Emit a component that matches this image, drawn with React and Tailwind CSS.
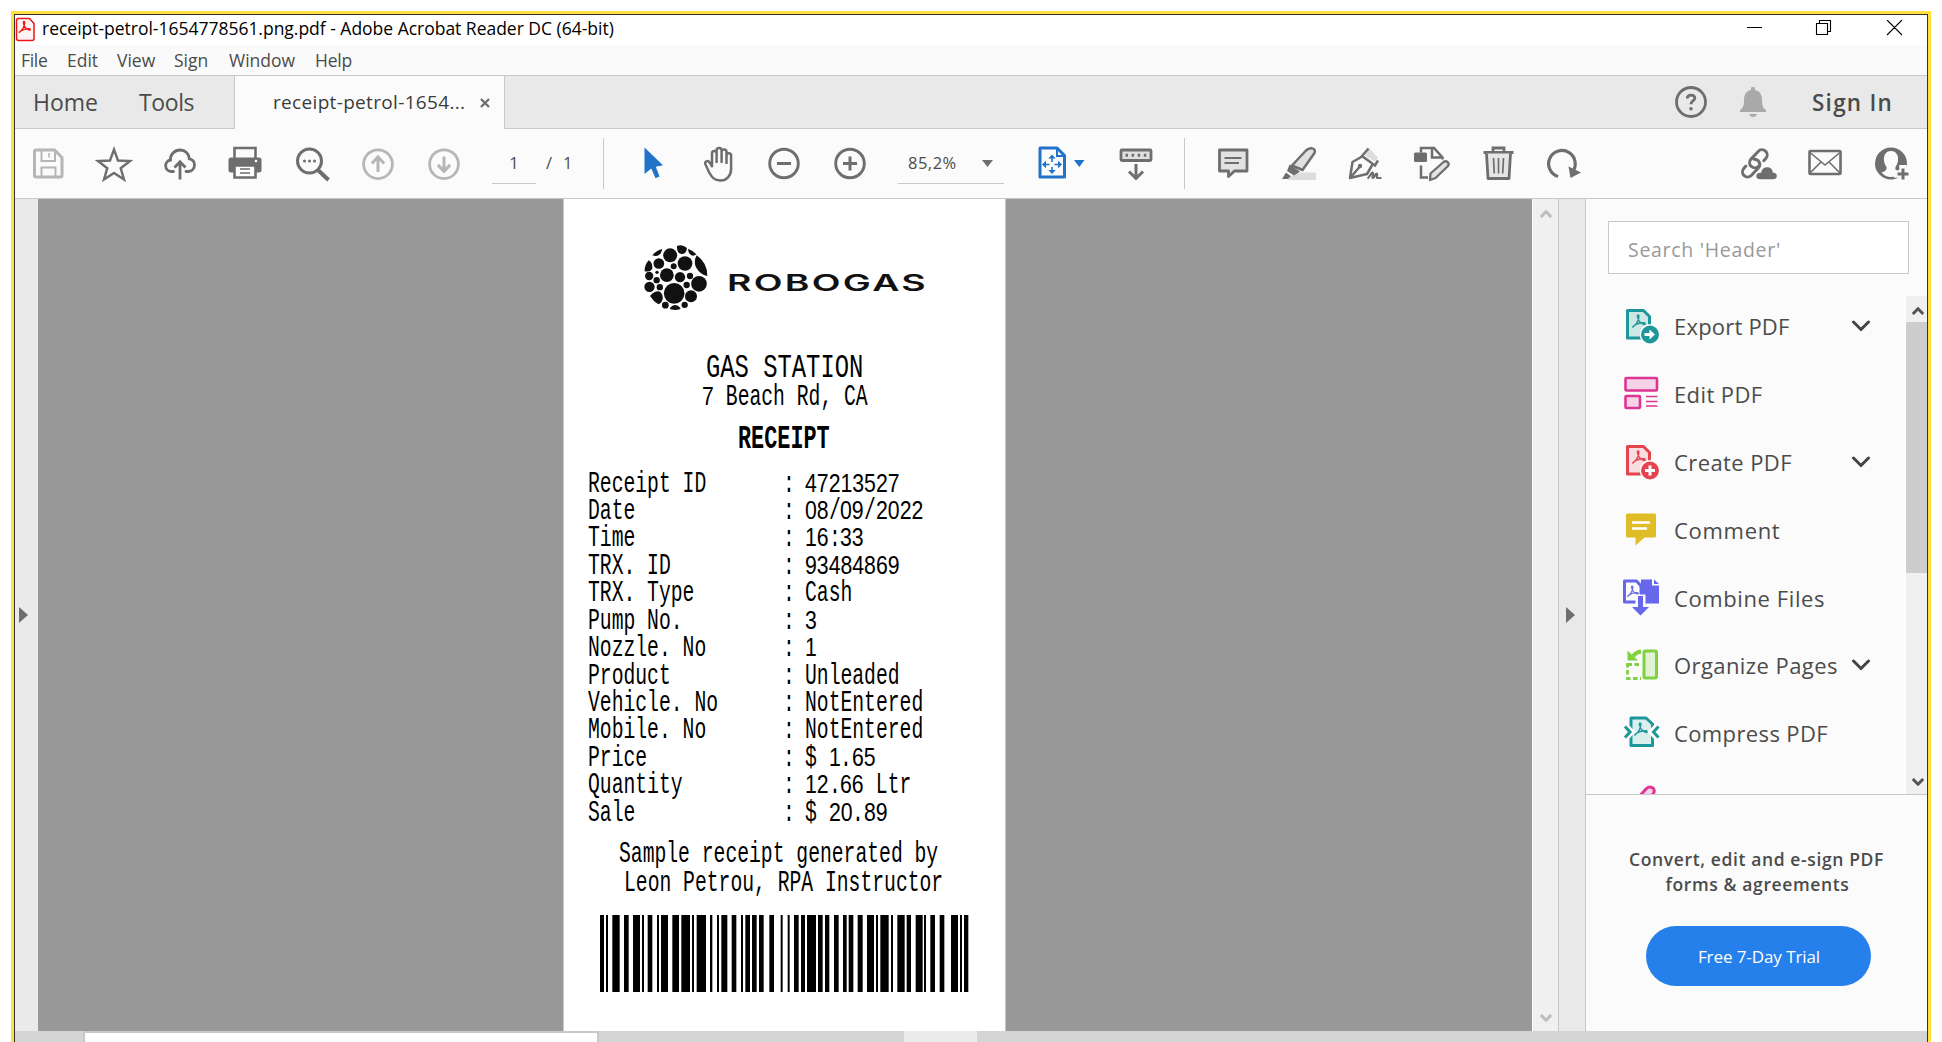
import React from "react";

const G = "#6e6e6e";
const L = "#b6b6b6";

function Ico({ box, children, c = G, className = "" }) {
  return (
    <svg width="40" height="40" viewBox={box} fill="none" stroke={c} strokeWidth="3" className={"block shrink-0 " + className}>
      {children}
    </svg>
  );
}

function Slot({ children, className = "w-[66px]" }) {
  return <div className={"flex shrink-0 justify-center " + className}>{children}</div>;
}

const Save = () => (
  <Ico box="28 143.5 40 40" c={L}>
    <path d="M36 149.5h18.500l7.500 7.500v18q0 1.500-1.500 1.500h-24.500q-1.500 0-1.500-1.500v-24q0-1.500 1.500-1.500z" />
    <path d="M41.500 149v11.500h13.500v-11.500M41.500 177v-10h14v10" strokeWidth="2" />
    <path d="M49 152.500v4.500" strokeWidth="1.600" />
  </Ico>
);
const Star = () => (
  <Ico box="94 143.500 40 40">
    <path strokeWidth="2.400" d="M114 149l4 11 12 .500-9.300 7.200 3.300 11.300-10-6.500-10 6.500 3.300-11.300-9.300-7.200 12-.5z" />
  </Ico>
);
const Cloud = () => (
  <Ico box="160 143.500 40 40">
    <path d="M173.500 171h-2.500a5.800 5.800 0 0 1-.5-11.500c-.5-5.500 4-10 9.500-10s8.800 3.600 9.300 8.800c3.400.6 5.200 3.200 5.200 6.200 0 3.700-2.700 6.500-6 6.500h-2.500" strokeWidth="2.800" strokeLinecap="round" />
    <path d="M180 179v-17M174.500 167l5.500-5.700 5.500 5.700" strokeWidth="2.800" />
  </Ico>
);
const Print = () => (
  <Ico box="224.500 143.500 40 40">
    <path d="M234 158v-10.500h21v10.500" strokeWidth="2.600" />
    <path d="M230.500 157h28q2.500 0 2.500 2.500v10.500q0 2-2.500 2h-28q-2.500 0-2.500-2v-10.500q0-2.500 2.500-2.500z" fill={G} stroke="none" />
    <path d="M234 165h21v12h-21z" fill="#fff" strokeWidth="2.600" />
    <path d="M239.500 168.500h10M239.500 172.500h10" strokeWidth="1.600" />
    <circle cx="255.500" cy="160.500" r="1.300" fill="#fff" stroke="none" />
  </Ico>
);
const Find = () => (
  <Ico box="291 143.500 40 40">
    <circle cx="309.500" cy="160.500" r="12" />
    <path d="M318 169.500l10.500 10" strokeWidth="4" />
    <g fill={G} stroke="none">
      <circle cx="304.500" cy="160.500" r="1.500" />
      <circle cx="309.500" cy="160.500" r="1.500" />
      <circle cx="314.500" cy="160.500" r="1.500" />
    </g>
  </Ico>
);
const Up = ({ down }) => (
  <Ico box="-20 -20.500 40 40" c={L}>
    <g transform={down ? "rotate(180 0 -.3)" : undefined}>
      <circle cx="0" cy="-.3" r="14.400" strokeWidth="2.800" />
      <path d="M0 7.500v-14.500M-6.200-1l6.200-6.500 6.200 6.500" />
    </g>
  </Ico>
);
const Arrow = () => (
  <Ico box="634 143.500 40 40" c="none">
    <path fill="#2173c9" d="M644.500 147l18.500 17.800-7.200 1.400 3.700 9.700-4 1.900-4.200-9.800-6.800 5.500z" />
  </Ico>
);
const Hand = () => (
  <Ico box="698 143.500 40 40">
    <path strokeWidth="2.500" strokeLinecap="round" strokeLinejoin="round" d="M709.500 163.500v-10.500c0-3.200 4.600-3.200 4.600 0v8.500v-11.500c0-3.300 5-3.300 5 0v11.500v-10c0-3.200 4.900-3.200 4.900 0v11v-7.500c0-3 4.600-3 4.600 0v13.500c0 7-4.600 11.500-10.600 11.500-6.500 0-9-3.500-11.500-8.500l-3.500-7.500c-1.300-3 2.400-4.600 4-2.200l2.500 4z" transform="translate(2.500 0)" />
  </Ico>
);
const Zoom = ({ plus }) => (
  <Ico box="-20 -20.500 40 40">
    <circle cx="0" cy="-1" r="14.300" strokeWidth="2.900" />
    <path d={plus ? "M-7-1h14M0-8v14" : "M-7-1h14"} />
  </Ico>
);
const Fit = () => (
  <Ico box="1032 143.500 40 40" c="#2173c9" className="ml-[28px]">
    <path d="M1040 147.500h17l7.500 7.500v21.500h-24.500z" strokeLinejoin="round" />
    <path d="M1057 148v7.500h7.500" strokeWidth="2" />
    <path d="M1052 157v4.500M1052 166.500v4.500M1045 164h4.500M1054.500 164h4.500" strokeWidth="1.600" />
    <path fill="#2173c9" stroke="none" d="M1052 154l3.700 4h-7.400zM1052 173.500l3.700-4h-7.400zM1042 164l4-3.800v7.600zM1062 164l-4-3.800v7.600z" />
  </Ico>
);
const Keys = () => (
  <Ico box="1116 143.500 40 40" className="ml-[31px]">
    <rect x="1121" y="149.500" width="30" height="10.500" rx="1" fill="#e0e0e0" strokeWidth="2.800" />
    <path d="M1125.500 154.800h22" strokeWidth="3" strokeDasharray="2.500 3.600" />
    <path d="M1136 163.500v14M1129 171l7 7 7-7" />
  </Ico>
);
const Note = () => (
  <Ico box="1214 143.500 40 40">
    <path d="M1220.500 149.500h27.500v21h-12.500l-6 5.500v-5.500h-9z" fill="#e2e2e2" strokeWidth="2.800" strokeLinejoin="round" />
    <path d="M1225.500 157.500h17M1225.500 162.500h14.500" strokeWidth="1.800" />
  </Ico>
);
const Marker = () => (
  <Ico box="1281 143.500 40 40">
    <path d="M1290 179l8-7h20v7.500h-28z" fill="#dcdcdc" stroke="none" />
    <path d="M1294 165l14-15c3.500-3.500 10.500-3 8.500 2.500l-12 17z" fill="#e0e0e0" strokeWidth="2.500" strokeLinejoin="round" />
    <path d="M1291.500 164l10.500 7-6 4-7-4.500zM1288 172l5 3.700-3 2.800h-6z" fill={G} stroke="none" />
  </Ico>
);
const Pen = () => (
  <Ico box="1348 143.500 40 40">
    <path d="M1368 155l4-7.500 9 9.500-3 4z" fill="#dcdcdc" stroke="none" />
    <path d="M1366 155.500l-10.500 6-2.500 16 17-4 5.500-9.500" strokeWidth="2.500" strokeLinejoin="round" />
    <path d="M1353.500 177l9-10.500M1371.500 148l-6.500 7.500 13 9.500 3-5" strokeWidth="2.500" />
    <circle cx="1363" cy="165.500" r="2.200" fill={G} stroke="none" />
    <path d="M1370.500 178c2-1 3.500-6 5-6s-1 5.500.5 5.500 2-4.500 3.500-4.500-.5 4.500 1 4.500h4" strokeWidth="2.200" />
  </Ico>
);
const EditDoc = () => (
  <Ico box="1415 143.500 40 40">
    <path d="M1424 152v-4.500h13l8.500 9.500v2M1424 165v12h7M1435 147.500v9.500h10" strokeWidth="2.500" />
    <rect x="1417" y="152" width="13" height="9.500" rx="1.500" fill={G} stroke="none" />
    <path d="M1433.500 173l13-11.500c3-2 6.500 1 4.500 4l-12.500 12-5.500 2z" fill="#e4e4e4" strokeWidth="2.300" strokeLinejoin="round" />
  </Ico>
);
const Trash = () => (
  <Ico box="1482 143.500 40 40">
    <path d="M1487.500 152h30M1497 151.500v-4h11v4" strokeWidth="2.800" />
    <path d="M1490.500 153l1.500 25h21l1.500-25" fill="#e6e6e6" strokeWidth="2.800" strokeLinejoin="round" />
    <path d="M1497.500 157.500l.8 15.500M1502.500 157.500v15.500M1507.500 157.500l-.8 15.500" strokeWidth="1.700" />
  </Ico>
);
const Rotate = () => (
  <Ico box="1549 143.500 40 40">
    <path d="M1563 176a13.300 13.300 0 1 1 14-4" strokeWidth="3.200" />
    <path d="M1573.500 166l12.500 6-10.500 5.500z" fill={G} stroke="none" />
  </Ico>
);
const Link = () => (
  <Ico box="1748 143.500 40 40">
    <g transform="rotate(-47 1765 163)" strokeWidth="3" fill="none" strokeLinecap="round">
      <path d="M1765.500 167.500a5.200 5.200 0 0 1 0-10.400h10.500a5.200 5.200 0 0 1 0 10.400h-3" />
      <path d="M1767.500 158.500a5.200 5.200 0 0 1-3 9h-10.500a5.200 5.200 0 0 1 0-10.400h3" transform="translate(0 1)" />
    </g>
    <path d="M1770 179.500c-6 0-6-8 .5-8 1.500-7.500 12-7.500 13 0 5.500 0 5.500 8-.5 8z" fill={G} stroke="#fbfbfb" strokeWidth="1.500" />
  </Ico>
);
const Mail = () => (
  <Ico box="1815 143.500 40 40">
    <rect x="1819.500" y="150.500" width="31" height="23" strokeWidth="2.600" rx="1" />
    <path d="M1820 152l15 12.500 15-12.500M1820 172.500l11-11M1850 172.500l-11-11" strokeWidth="1.600" />
  </Ico>
);
const User = () => (
  <Ico box="1882 143.500 40 40">
    <circle cx="1901" cy="163" r="16" fill={G} stroke="none" />
    <path d="M1901 150.500c5.500 0 7.500 4.500 7 9.500-.3 3-1.500 5-2.500 6.500-.5 3 .5 3.500 4 5-2.500 3.500-5 5-8.500 5s-7-1.500-9.500-4.500c4-1.500 5.500-2.500 5-5.500-1-1.500-2.300-3.500-2.500-6.500-.5-5 1.500-9.500 7-9.500z" fill="#fbfbfb" stroke="none" />
    <path d="M1913 164.500v18M1904 173.500h18" strokeWidth="7.500" stroke="#fbfbfb" />
    <path d="M1913 168v11M1907.500 173.500h11" strokeWidth="3" />
  </Ico>
);

const Tref = ({ c, t }) => (
  <path transform={t} stroke={c} strokeWidth="1.400" fill="none" strokeLinejoin="round" d="M1 12c2.500-2 5.500-6.500 6-10.500 0-2-2-2-1.600 0 .6 4 3.600 7 6.600 8 1.600.4 1.700-1.600 0-1.700-4-.1-8 1.400-10 3-1.500 1-1.500 1.700-1 1.200z" />
);

const DocIcon = ({ c, f, plus }) => (
  <>
    <path d="M6.500 4.500h16l6 6v21.500h-22z" fill={f} stroke={c} strokeWidth="3" strokeLinejoin="round" />
    <Tref c={c} t="translate(11 9)" />
    <circle cx="29" cy="28.500" r="9.700" fill={c} stroke="#fbfbfb" strokeWidth="1.500" />
    {plus ? (
      <path d="M29 23.500v10M24 28.500h10" stroke="#fff" strokeWidth="3" />
    ) : (
      <path d="M23.500 27h5v-3.500l5.500 5-5.500 5v-3.500h-5z" fill="#fff" stroke="none" />
    )}
  </>
);

const tools = [
  ["Export PDF", true, "tracking-[0.2px]", <DocIcon c="#1c979a" f="#cde7e7" />],
  ["Edit PDF", false, "tracking-[0.4px]", (
    <g stroke="#dc3593" fill="#f6d3e6" strokeWidth="2.600">
      <rect x="4.500" y="4" width="31.500" height="12.500" rx="1" />
      <rect x="4.500" y="22" width="14.500" height="12" rx="1" />
      <path d="M25 22.500h11.500M25 27.500h11.500M25 32h11.500" strokeWidth="1.600" />
    </g>
  )],
  ["Create PDF", true, "tracking-[0.4px]", <DocIcon c="#e5434e" f="#f9dcde" plus />],
  ["Comment", false, "tracking-[0.7px]", (
    <g stroke="none">
      <path d="M6.500 3.500h27q1.500 0 1.500 1.500v21q0 1.500-1.500 1.500h-10l-9 8v-8h-8q-1.500 0-1.500-1.500v-21q0-1.500 1.500-1.500z" fill="#dfbd27" />
      <path d="M11 12.500h18M11 18.500h15" stroke="#fff" strokeWidth="2.400" />
    </g>
  )],
  ["Combine Files", false, "tracking-[0.6px]", (
    <g>
      <path d="M20 1.500h11v6h7v18h-18z" fill="#6767ec" stroke="none" />
      <path d="M33 1.500v4.500h5z" fill="#6767ec" stroke="none" />
      <path d="M3.500 3h12l4.500 5v16h-16.500z" fill="#fbfbfb" stroke="#6767ec" strokeWidth="3" strokeLinejoin="round" />
      <Tref c="#6767ec" t="translate(6 8) scale(.85)" />
      <path d="M14.500 28.500v-12h10v12z" fill="#fbfbfb" stroke="none" />
      <path d="M17 18h5v11h6l-8.500 8.500-8.500-8.500h6z" fill="#6767ec" stroke="none" />
    </g>
  )],
  ["Organize Pages", true, "tracking-[0.42px]", (
    <g stroke="#7fd13f" strokeWidth="3">
      <rect x="23" y="6" width="12.500" height="27" rx="1.500" fill="#e2f3d5" />
      <path d="M6.500 18v15.500h13.500M6.500 19.500h13.500" strokeDasharray="4.500 2.500" strokeWidth="2.800" fill="none" />
      <path d="M20 6.500c-4 .5-6 2-8 4.500" strokeWidth="4" fill="none" />
      <path d="M6.500 5.500v10h10.500z" fill="#7fd13f" stroke="none" />
    </g>
  )],
  ["Compress PDF", false, "tracking-[0.38px]", (
    <g stroke="#1c979a" strokeWidth="3" fill="none">
      <path d="M10 5h15l6.500 6v21.500h-21.500z" fill="#daeeee" strokeLinejoin="round" />
      <Tref c="#1c979a" t="translate(13 10)" />
      <path d="M3 11.500l7 7.500-7 7.500M38 11.500l-7 7.500 7 7.500" stroke="#fbfbfb" strokeWidth="6.500" />
      <path d="M4 13.500l5 5.500-5 5.500M37.500 13.500l-5 5.500 5 5.500" />
    </g>
  )],
  ["Redact", false, "tracking-[0.3px]", (
    <path d="M8 27l17-19c3.500-4 10.500-1 7.500 4.500l-16 19-9 3z" fill="#f6d3e6" stroke="#dc3593" strokeWidth="3" />
  )],
];

const bars = [
  [120, 132], [138, 144], [157, 179], [192, 206], [219, 240], [246, 252], [263, 277], [291, 297], [303, 324],
  [337, 357], [364, 390], [396, 402], [410, 438], [450, 457], [471, 477], [484, 502], [515, 529], [543, 549],
  [556, 570], [576, 590], [597, 611], [628, 642], [662, 668], [683, 689], [702, 716], [723, 735], [741, 768],
  [774, 788], [795, 808], [822, 836], [849, 860], [866, 880], [893, 908], [921, 942], [948, 954], [961, 986],
  [993, 999], [1012, 1034], [1040, 1053], [1067, 1088], [1092, 1098], [1111, 1125], [1139, 1153], [1173, 1194],
  [1200, 1206], [1212, 1225],
];

// Narrow receipt lettering: every run is squeezed so that each character takes one cell.
function Mono({ children, size = 29.5, cell = 11.82 }) {
  const runs = children.match(/\d+|\D+/g);
  return (
    <span className="whitespace-pre" style={{ fontSize: size }}>
      {runs.map((r, i) => {
        const digit = /\d/.test(r);
        const fs = digit ? size * 0.905 : size;
        const sx = cell / (fs * (digit ? 0.556 : 0.6));
        return (
          <span key={i} className="inline-block leading-none" style={{ width: r.length * cell }}>
            <span
              className={digit ? "inline-block origin-left leading-none font-['Liberation_Sans',sans-serif]" : "inline-block origin-left leading-none"}
              style={{ fontSize: fs, transform: `scaleX(${sx})` }}
            >
              {r}
            </span>
          </span>
        );
      })}
    </span>
  );
}

const rows = [
  ["Receipt ID", "47213527"], ["Date", "08/09/2022"], ["Time", "16:33"], ["TRX. ID", "93484869"],
  ["TRX. Type", "Cash"], ["Pump No.", "3"], ["Nozzle. No", "1"], ["Product", "Unleaded"],
  ["Vehicle. No", "NotEntered"], ["Mobile. No", "NotEntered"], ["Price", "$ 1.65"],
  ["Quantity", "12.66 Ltr"], ["Sale", "$ 20.89"],
];

function Globe() {
  const c = [[330.5, 166, 21], [375, 190.5, 22], [296.5, 190.5, 16], [341, 199, 9], [291, 217, 5], [320.5, 225.5, 20.5], [360, 231.5, 15.5], [390, 228, 9.5], [267.5, 228, 12.5], [290, 240.5, 9.5], [380, 255, 9.5], [417, 251.5, 23.5], [268.5, 260.5, 15.5], [299.5, 261.5, 9.5], [342.5, 280, 31], [393, 289, 18], [316, 315.5, 10], [374, 314.5, 9.5]];
  return (
    <svg width="66" height="67" viewBox="249 132 198 201" fill="#111" className="mt-px shrink-0">
      {c.map(([x, y, r]) => <circle key={x + "-" + y} cx={x} cy={y} r={r} />)}
      <path d="M351 138q16-6 30 6-2 18-16 18-15-2-14-24zM384 146q16 6 25 17-10 8-19 0-6-8-6-17zM277 166q10-14 30-19-2 12-10 18-8 6-20 1zM266 181q12 6 11 24-4 12-23 9-1-18 12-33zM410 166q32 22 32 62-22-4-34-26-8-18 2-36zM270 288q10-14 26-14 14 6 12 24-4 14-14 14-14-8-24-24zM329 325q16-20 33 0-2 5-16 5-15 0-17-5z" />
    </svg>
  );
}

const Chev = ({ up, c, className = "", w = 12, sw = 3 }) => (
  <svg width={w} height={(w * 2) / 3} viewBox="0 0 12 8" fill="none" stroke={c} strokeWidth={sw} className={"shrink-0 " + className}>
    <path d={up ? "M.8 7l5.200-5.200L11.200 7" : "M.8 1l5.200 5.200L11.200 1"} />
  </svg>
);

const Tri = () => (
  <svg width="9" height="16" viewBox="0 0 10 16" preserveAspectRatio="none" fill={G}><path d="M0 0l10 8-10 8z" /></svg>
);

export default function App() {
  return (
    <div className="h-[1042px] w-[1942px] overflow-hidden bg-white pl-[11px] pt-[11px] font-['Open_Sans',sans-serif] text-[#4b4b4b]">
      <div className="flex h-[1060px] w-[1920px] flex-col border-[3px] border-[#ffe23f]">
        <div className="flex grow flex-col border border-[#333]">
          <div className="flex h-[30px] shrink-0 items-center bg-white pr-[24px] text-black">
            <svg width="20" height="26" viewBox="15 15 20 26" className="shrink-0">
              <path d="M18.500 16.500h11l4.500 5v15q0 2-2 2h-13.500q-2 0-2-2v-18q0-2 2-2z" fill="#fdf3f3" stroke="#f01414" strokeWidth="1.500" />
              <Tref c="#f01414" t="translate(18.500 19.500) scale(.9)" />
            </svg>
            <span className="ml-[7px] whitespace-nowrap pb-[3px] text-[17.5px] tracking-[-0.015px]">receipt-petrol-1654778561.png.pdf - Adobe Acrobat Reader DC (64-bit)</span>
            <svg width="156" height="16" viewBox="1747 20 156 16" className="-mt-[4px] ml-auto shrink-0" fill="none" stroke="#000" strokeWidth="1.100">
              <path d="M1747 27.500h15M1816.500 23.500h11v11h-11zM1819.500 23v-2.500h11v11h-3M1887 20l15 15M1902 20l-15 15" />
            </svg>
          </div>

          <div className="flex h-[30px] shrink-0 items-center bg-[#fafafa] pl-[6px] text-[17.5px]">
            <span className="w-[46px] tracking-[-0.3px]">File</span>
            <span className="w-[50px]">Edit</span>
            <span className="w-[57px]">View</span>
            <span className="w-[55px]">Sign</span>
            <span className="w-[86px]">Window</span>
            <span className="tracking-[-0.2px]">Help</span>
          </div>

          <div className="flex h-[54px] shrink-0 border-y border-[#c8c8c8] bg-[#e9e9e9]">
            <div className="flex w-[219px] items-center pl-[18px] text-[23px]">
              <span className="w-[106px]">Home</span>
              <span className="tracking-[-0.4px]">Tools</span>
            </div>
            <div className="-mb-px flex w-[271px] items-center border-x border-[#c8c8c8] bg-[#fbfbfb] pl-[38px] text-[19px] text-[#3c3c3c]">
              <span className="whitespace-nowrap tracking-[0.33px]">receipt-petrol-1654...</span>
              <svg width="10" height="10" viewBox="0 0 10 10" className="ml-[15px]" stroke={G} strokeWidth="2.300"><path d="M1 1l8 8M9 1l-8 8" /></svg>
            </div>
            <div className="ml-auto flex items-center">
              <svg width="34" height="34" viewBox="-17 -17 34 34" fill="none" stroke={G}>
                <circle r="14.500" strokeWidth="2.800" />
                <path d="M-3.800-3.500c0-4.500 8-4.500 7.600-.2-.3 2.500-3.800 2.700-3.800 6" strokeWidth="2.800" />
                <circle cy="6.800" r="1" strokeWidth="1.600" />
              </svg>
              <svg width="26" height="30" viewBox="0 0 26 30" className="ml-[32px]" fill="#a9a9a9">
                <path d="M11 3v-2q0-1 2-1t2 1v2c5 1 7 5 7 10 0 6 1 8 4 10v2h-26v-2c3-2 4-4 4-10 0-5 2-9 7-10zM9 27h8q-1 3-4 3t-4-3z" />
              </svg>
              <span className="ml-[46px] w-[115px] whitespace-nowrap pt-px text-[22.5px] font-semibold tracking-[1.25px]">Sign In</span>
            </div>
          </div>

          <div className="flex h-[70px] shrink-0 items-center border-b border-[#c8c8c8] bg-[#fbfbfb] text-[16.5px]">
            <Slot><Save /></Slot>
            <Slot><Star /></Slot>
            <Slot><Cloud /></Slot>
            <Slot className="w-[64px]"><Print /></Slot>
            <Slot className="w-[68px]"><Find /></Slot>
            <Slot><Up /></Slot>
            <Slot><Up down /></Slot>
            <div className="ml-[15px] flex h-[41px] w-[44px] items-center justify-center border-b border-[#c8c8c8]">1</div>
            <div className="flex w-[67px] gap-[11px] pl-[10px]"><span>/</span><span>1</span></div>
            <div className="h-[51px] w-px bg-[#c8c8c8]" />
            <Slot className="ml-[17px] w-[66px]"><Arrow /></Slot>
            <Slot className="w-[62px]"><Hand /></Slot>
            <Slot className="w-[70px]"><Zoom /></Slot>
            <Slot className="w-[62px]"><Zoom plus /></Slot>
            <div className="ml-[17px] flex h-[41px] w-[106px] items-center border-b border-[#c8c8c8] pl-[10px]">
              <span className="w-[74px] tracking-[0.5px]">85,2%</span>
              <svg width="11" height="7" viewBox="0 0 11 7" fill={G}><path d="M0 0h11l-5.500 7z" /></svg>
            </div>
            <Fit />
            <svg width="11" height="7" viewBox="0 0 11 7" fill="#2173c9" className="ml-[2px]"><path d="M0 0h10.500l-5.200 7z" /></svg>
            <Keys />
            <div className="ml-[28px] h-[51px] w-px bg-[#c8c8c8]" />
            <div className="ml-[28px] flex gap-[26.2px]">
              <Note /><Marker /><Pen /><EditDoc /><Trash /><Rotate />
            </div>
            <div className="ml-auto mr-[15px] flex gap-[27px]">
              <Link /><Mail /><User />
            </div>
          </div>

          <div className="flex h-[832px] shrink-0">
            <div className="flex w-[23px] items-center bg-[#eaeaea] pl-[4px]"><Tri /></div>
            <div className="w-[1494px] bg-[#999] pl-[525px]">
              <div className="h-full w-[443px] border-x border-[#c8c8c8] bg-white text-[29.5px] text-black font-['Liberation_Mono',monospace]">
                <div className="flex h-[152px] pl-[79px] pt-[44px]">
                  <Globe />
                  <span className="ml-[18px] mt-[25px] h-[30px] origin-left scale-x-[1.67] text-[22.4px] font-semibold leading-[30px] tracking-[1.4px] text-[#111] font-['Inter',sans-serif]">ROBOGAS</span>
                </div>
                <div className="h-[30px] pl-[141.5px] leading-[30px]"><Mono size={34} cell={14.3}>GAS STATION</Mono></div>
                <div className="mt-px h-[30px] pl-[138px] leading-[30px]"><Mono>7 Beach Rd, CA</Mono></div>
                <div className="mt-[11px] h-[30px] pl-[174px] font-bold leading-[28px]"><Mono size={33.5} cell={13.1}>RECEIPT</Mono></div>
                <div className="mt-[16.5px] pl-[24px]">
                  {rows.map(([a, b]) => (
                    <div key={a} className="flex h-[27.45px] leading-[27.45px]">
                      <div className="w-[195px]"><Mono>{a}</Mono></div>
                      <div className="w-[22px]"><Mono>:</Mono></div>
                      <Mono>{b}</Mono>
                    </div>
                  ))}
                </div>
                <div className="mt-[14.3px] h-[28.3px] pl-[54.5px] leading-[28.3px]"><Mono>Sample receipt generated by</Mono></div>
                <div className="h-[28.3px] pl-[60px] leading-[28.3px]"><Mono>Leon Petrou, RPA Instructor</Mono></div>
                <svg width="369" height="77" viewBox="120 0 1107 231" preserveAspectRatio="none" className="ml-[36px] mt-[17.5px] block">
                  {bars.map(([a, b]) => <rect key={a} x={a} y="0" width={b - a} height="231" />)}
                </svg>
              </div>
            </div>
            <div className="flex w-[27px] flex-col items-center justify-between border-x border-l-white border-r-[#c8c8c8] bg-[#f0f0f0] pb-[9px] pt-[11px]">
              <Chev up c="#bdbdbd" />
              <Chev c="#bdbdbd" />
            </div>
            <div className="flex w-[27px] items-center border-r border-[#c8c8c8] bg-[#e9e9e9] pl-[7px]"><Tri /></div>
            <div className="flex w-[341px] flex-col bg-[#fbfbfb]">
              <div className="ml-[22px] mt-[22px] flex h-[53px] w-[301px] shrink-0 items-center border border-[#c8c8c8] bg-white pl-[19px] pt-[5px] text-[19.5px] tracking-[0.7px] text-[#999]">Search &#39;Header&#39;</div>
              <div className="mt-[22px] flex h-[498px] shrink-0 overflow-hidden">
                <div className="-mt-[4px] w-[319px]">
                  {tools.map(([n, more, track, ic]) => (
                    <div key={n} className="flex h-[67.9px] items-center pl-[35px] text-[22px]">
                      <svg width="40" height="40" viewBox="0 0 40 40" className="shrink-0">{ic}</svg>
                      <span className={"ml-[13px] w-[177px] whitespace-nowrap pt-px " + track}>{n}</span>
                      {more && (
                        <svg width="20" height="12" viewBox="0 0 20 12" fill="none" stroke="#444" strokeWidth="3" strokeLinecap="round"><path d="M2.500 2l7.500 7.500L17.500 2" /></svg>
                      )}
                    </div>
                  ))}
                </div>
                <div className="flex w-[22px] flex-col items-center border-l border-white bg-[#f0f0f0]">
                  <div className="flex h-[26px] shrink-0 items-center pl-[2px] pt-[3px]"><Chev up c="#555" /></div>
                  <div className="h-[251px] w-full bg-[#cdcdcd]" />
                  <Chev c="#555" className="mb-[8px] ml-[2px] mt-auto" />
                </div>
              </div>
              <div className="flex grow flex-col items-center border-t border-[#c8c8c8] pt-[52px]">
                <p className="text-center text-[17.5px] font-semibold leading-[25px] tracking-[0.62px]">
                  Convert, edit and e-sign PDF<br /><span className="pl-[2px]">forms &amp; agreements</span>
                </p>
                <button className="ml-[3px] mt-[29px] h-[60px] w-[225px] rounded-full bg-[#2680eb] pl-[2px] pt-px text-[17px] tracking-[-0.08px] text-white">Free 7-Day Trial</button>
              </div>
            </div>
          </div>

          <div className="flex grow bg-[#d4d4d4]">
            <div className="ml-[68px] w-[516px] border-x-2 border-t-2 border-[#c8c8c8] bg-white" />
            <div className="ml-[305px] w-[73px] bg-[#ececec]" />
          </div>
        </div>
      </div>
    </div>
  );
}
